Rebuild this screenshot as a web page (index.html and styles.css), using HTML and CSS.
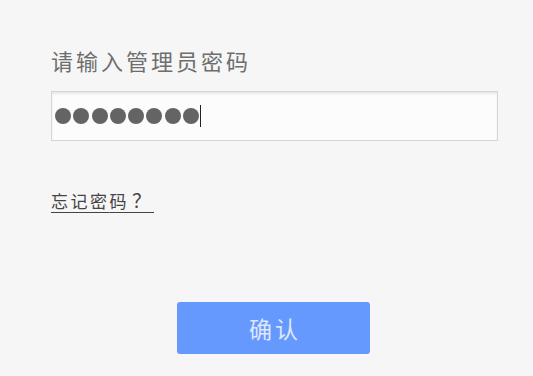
FILE: index.html
```html
<!DOCTYPE html>
<html lang="zh">
<head>
<meta charset="utf-8">
<link rel="stylesheet" href="styles.css">
</head>
<body>
<div class="page">
  <div class="label">请输入管理员密码</div>
  <div class="field">
    <span class="dot"></span><span class="dot"></span><span class="dot"></span><span class="dot"></span>
    <span class="dot"></span><span class="dot"></span><span class="dot"></span><span class="dot"></span>
    <span class="caret"></span>
  </div>
  <a class="forgot" href="#">忘记密<span class="wide">码</span><span class="q">？</span></a>
  <div class="actions">
    <button class="confirm">确认</button>
  </div>
</div>
</body>
</html>
```
FILE: styles.css
```css
html, body {
  margin: 0;
  padding: 0;
  background: #f6f6f6;
}
body {
  width: 533px;
  height: 376px;
  overflow: hidden;
  font-family: "Noto Sans CJK SC", "Liberation Sans", sans-serif;
}
.page {
  display: flex;
  flex-direction: column;
  align-items: flex-start;
  padding: 49px 35px 0 51px;
}
.label {
  font-size: 22px;
  letter-spacing: 3px;
  line-height: 22px;
  color: #6e6e6e;
}
.field {
  margin-top: 20px;
  width: 447px;
  height: 50px;
  box-sizing: border-box;
  border: 1px solid #d6d6d6;
  background: #fcfcfc;
  box-shadow: inset 0 2px 2px rgba(0,0,0,0.08);
  display: flex;
  align-items: center;
  padding-left: 3px;
  gap: 2.3px;
}
.dot {
  width: 16px;
  height: 16px;
  border-radius: 50%;
  background: #646464;
}
.caret {
  width: 1px;
  height: 22px;
  background: #222;
  margin-left: -1px;
}
.forgot {
  margin-top: 50px;
  font-size: 17px;
  letter-spacing: 2.5px;
  line-height: 17px;
  color: #444;
  text-decoration: underline;
  text-underline-offset: 4px;
}
.forgot .wide {
  letter-spacing: 5.5px;
}
.forgot .q {
  font-size: 19px;
  letter-spacing: 3px;
}
.actions {
  align-self: stretch;
  display: flex;
  padding-left: 126px;
  margin-top: 93px;
}
.confirm {
  width: 193px;
  height: 52px;
  border: 0;
  border-radius: 3px;
  background: #6699fd;
  color: #dde7ff;
  font-family: "Noto Sans CJK SC", sans-serif;
  font-size: 23px;
  letter-spacing: 3px;
  padding: 0 0 0 3px;
}
```
